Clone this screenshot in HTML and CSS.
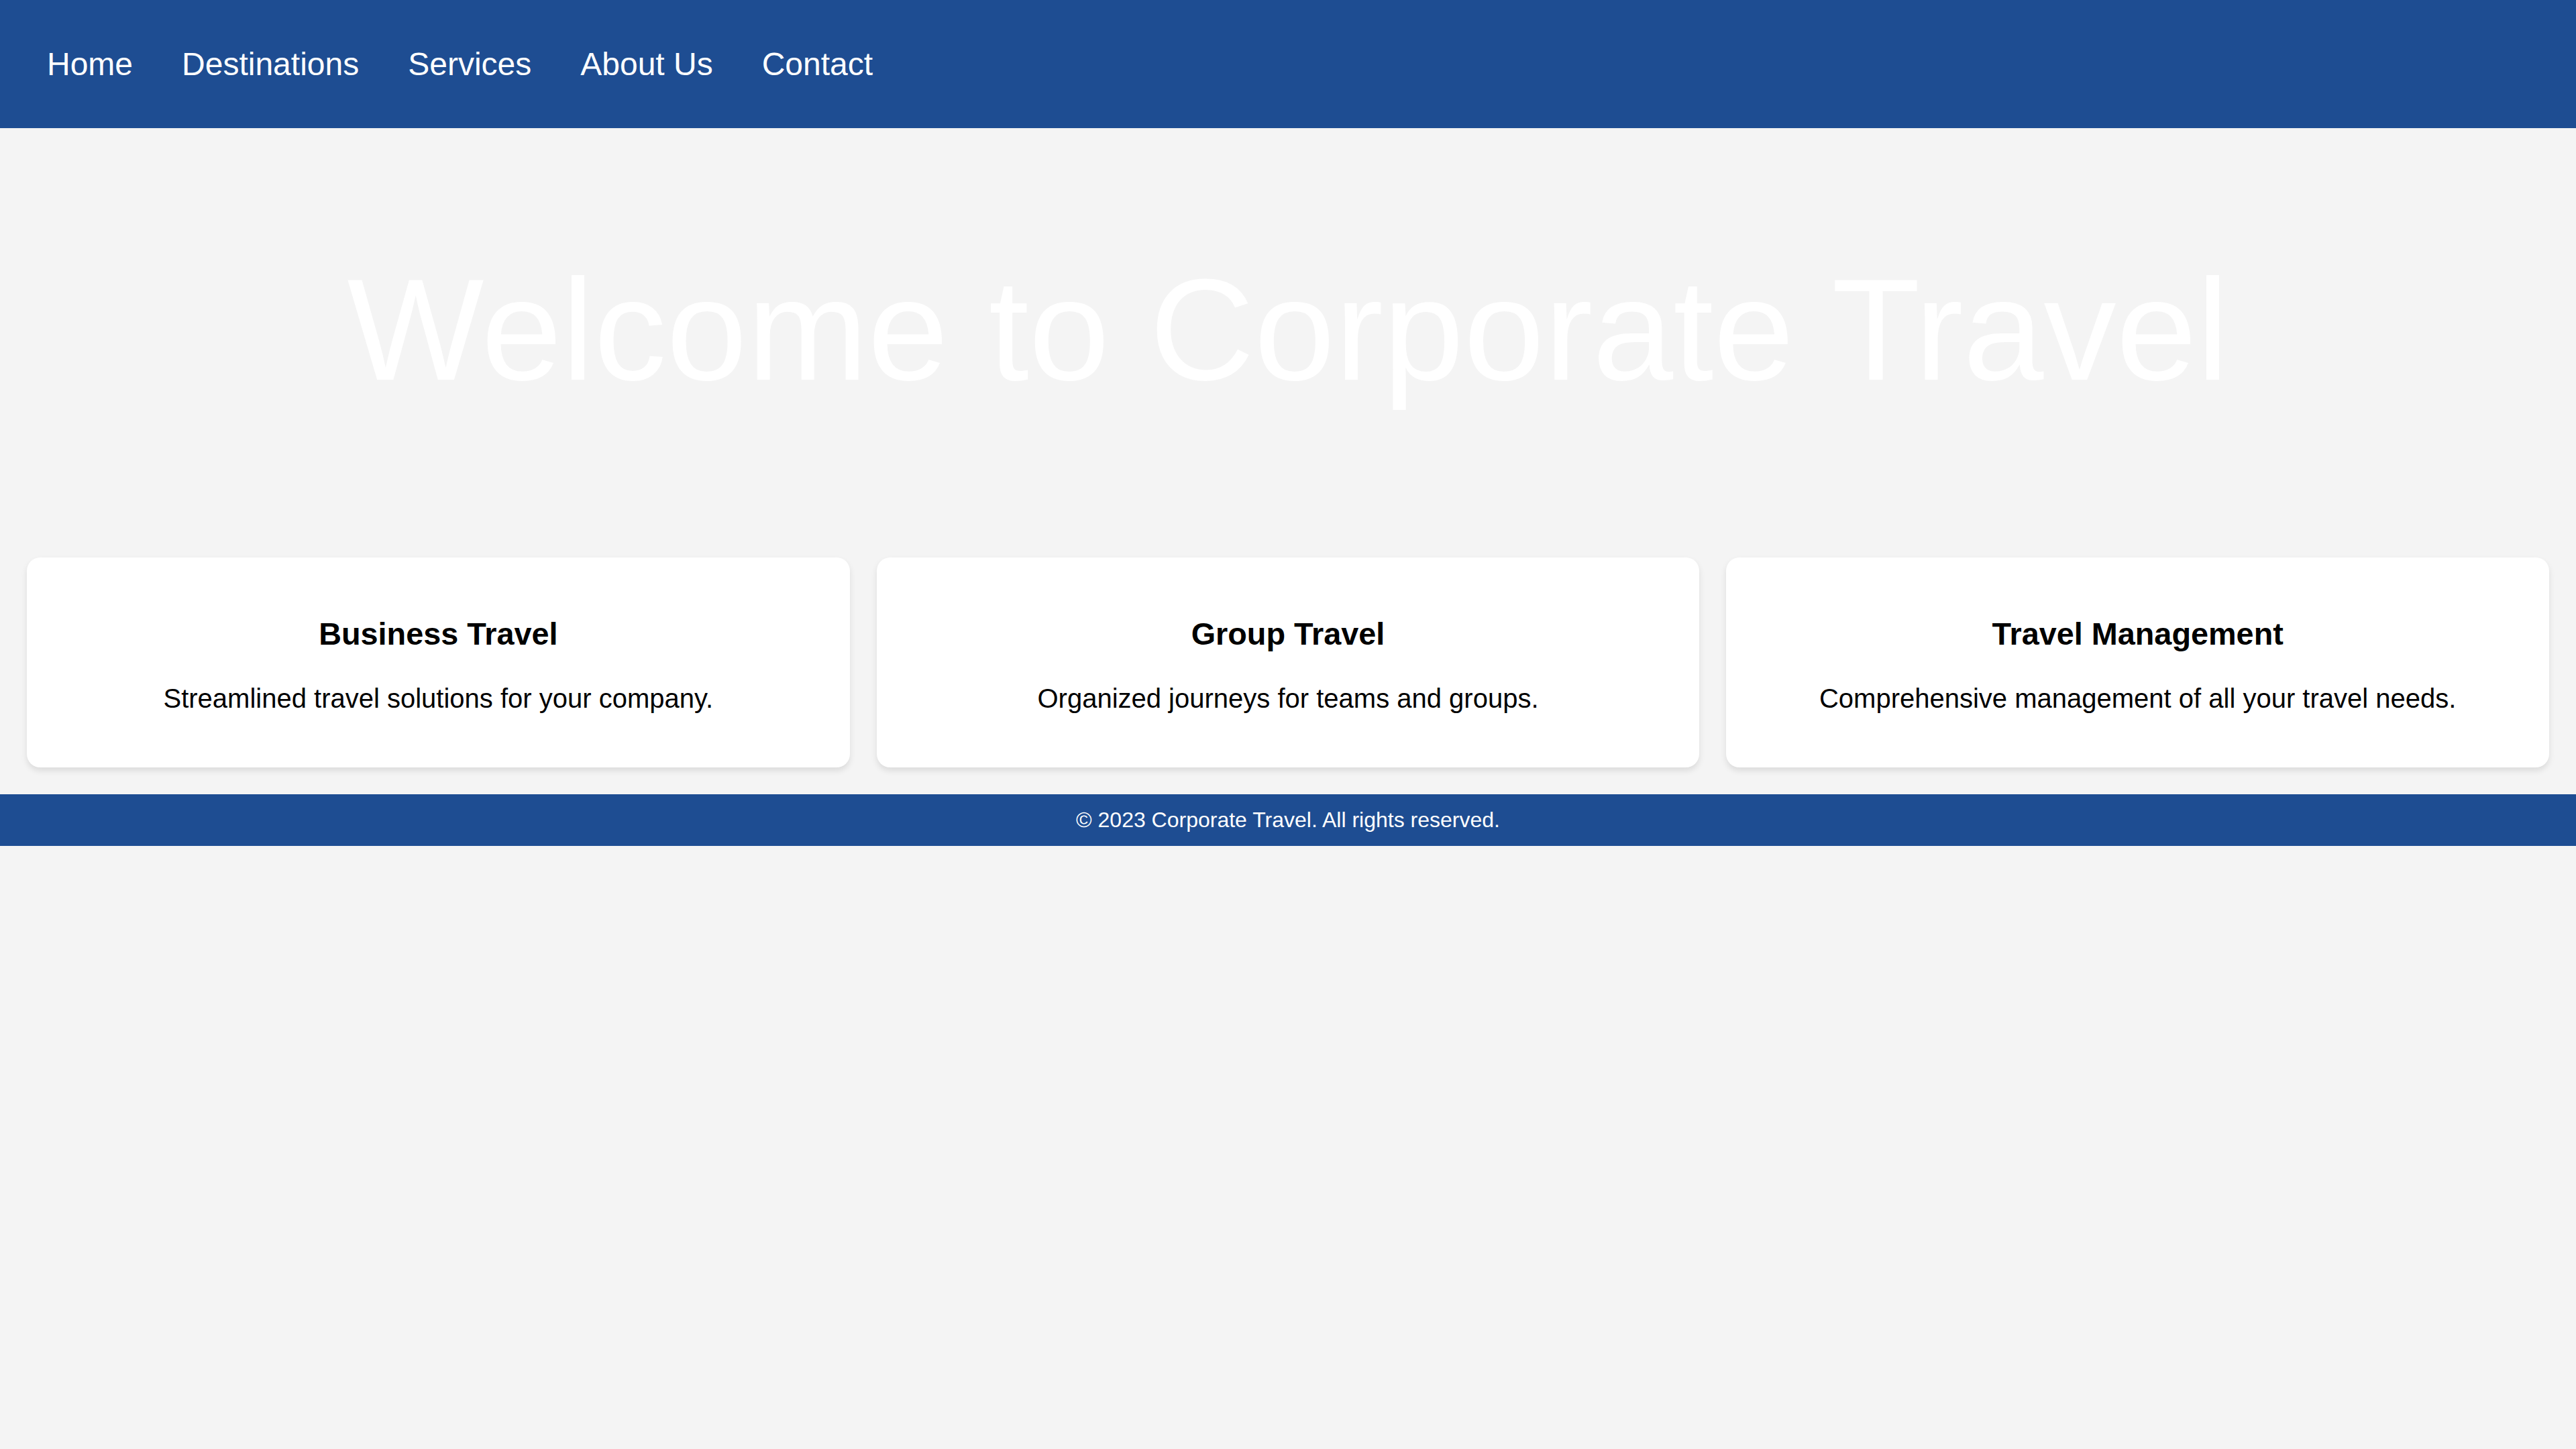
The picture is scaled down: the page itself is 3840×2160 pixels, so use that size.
FILE: index.html
```html
<!DOCTYPE html>
<html lang="en">
<head>
<meta charset="utf-8">
<title>Corporate Travel</title>
<link rel="stylesheet" href="styles.css">
</head>
<body>
<nav class="topnav">
  <a class="nav-link" href="#">Home</a>
  <a class="nav-link" href="#">Destinations</a>
  <a class="nav-link" href="#">Services</a>
  <a class="nav-link" href="#">About Us</a>
  <a class="nav-link" href="#">Contact</a>
</nav>
<header class="hero">
  <h1 class="hero-title">Welcome to Corporate Travel</h1>
</header>
<main class="cards">
  <section class="card">
    <h3 class="card-title">Business Travel</h3>
    <p class="card-text">Streamlined travel solutions for your company.</p>
  </section>
  <section class="card">
    <h3 class="card-title">Group Travel</h3>
    <p class="card-text">Organized journeys for teams and groups.</p>
  </section>
  <section class="card">
    <h3 class="card-title">Travel Management</h3>
    <p class="card-text">Comprehensive management of all your travel needs.</p>
  </section>
</main>
<footer class="footer">
  <p class="footer-text">&copy; 2023 Corporate Travel. All rights reserved.</p>
</footer>
</body>
</html>
```
FILE: styles.css
```css
html, body {
  margin: 0;
  padding: 0;
}
body {
  background: #f4f4f4;
  font-family: "Liberation Sans", Arial, sans-serif;
  color: #000;
}
.topnav {
  background: #1e4d92;
  height: 191px;
  box-sizing: border-box;
  display: flex;
  align-items: center;
  gap: 73px;
  padding-left: 70px;
}
.nav-link {
  color: #fff;
  text-decoration: none;
  font-size: 48px;
}
.hero {
  height: 600px;
  display: flex;
  align-items: center;
  justify-content: center;
}
.hero-title {
  margin: 0;
  color: #fff;
  font-size: 216px;
  font-weight: normal;
  text-align: center;
}
.cards {
  display: grid;
  grid-template-columns: repeat(3, 1fr);
  gap: 40px;
  padding: 40px;
}
.card {
  background: #fff;
  border-radius: 20px;
  padding: 40px;
  text-align: center;
  box-shadow: 0 5px 10px rgba(0, 0, 0, 0.1);
}
.card-title {
  font-size: 46.8px;
  font-weight: bold;
  margin: 46.8px 0;
}
.card-text {
  font-size: 40px;
  margin: 40px 0;
}
.footer {
  background: #1e4d92;
  padding: 20px;
  text-align: center;
}
.footer-text {
  margin: 0;
  color: #fff;
  font-size: 32px;
}
```
